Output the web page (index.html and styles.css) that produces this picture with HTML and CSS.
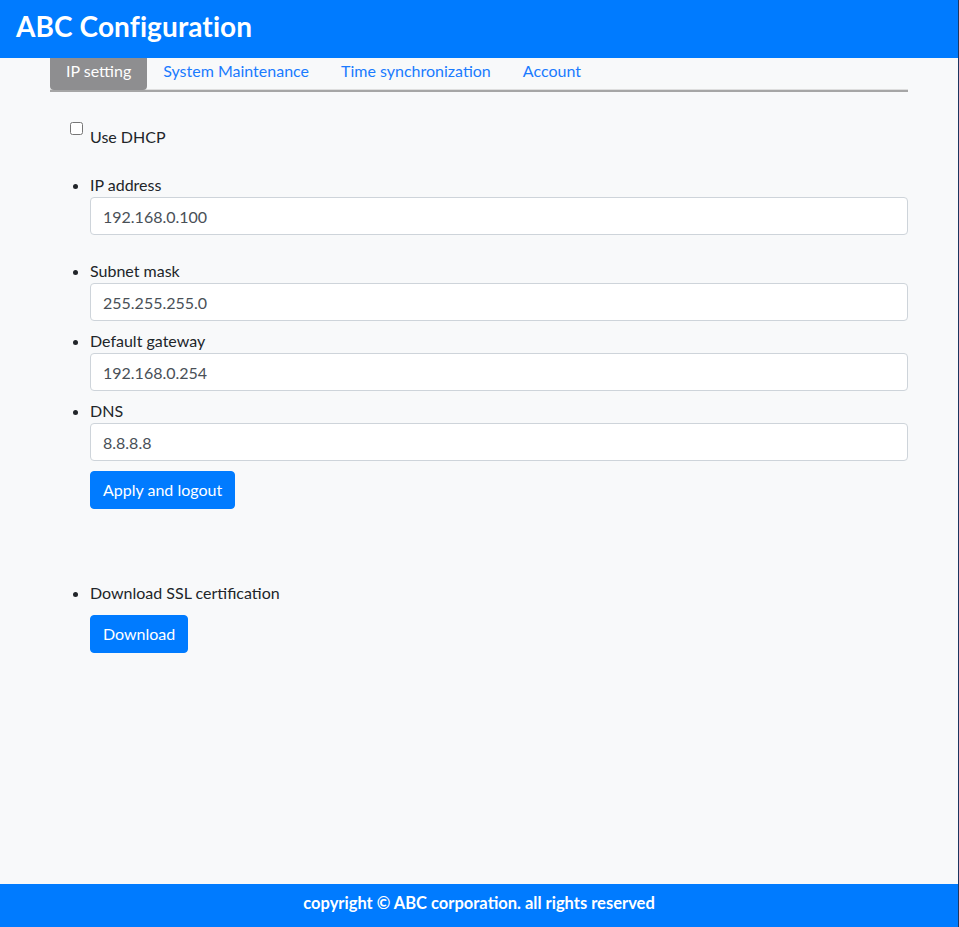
FILE: index.html
```html
<!DOCTYPE html>
<html lang="en">
<head>
<meta charset="utf-8">
<title>ABC Configuration</title>
<link rel="stylesheet" href="styles.css">
</head>
<body>
<div class="page">
  <header class="header">
    <h1 class="title">ABC Configuration</h1>
  </header>
  <main class="container">
    <nav class="tabs">
      <a class="tab active">IP setting</a>
      <a class="tab">System Maintenance</a>
      <a class="tab">Time synchronization</a>
      <a class="tab">Account</a>
    </nav>
    <div class="dhcp">
      <input type="checkbox" class="check">
      <span class="dhcp-label">Use DHCP</span>
    </div>
    <ul class="fields">
      <li class="field field-first">
        <div class="label">IP address</div>
        <input class="input" type="text" value="192.168.0.100">
      </li>
      <li class="field">
        <div class="label">Subnet mask</div>
        <input class="input" type="text" value="255.255.255.0">
      </li>
      <li class="field">
        <div class="label">Default gateway</div>
        <input class="input" type="text" value="192.168.0.254">
      </li>
      <li class="field">
        <div class="label">DNS</div>
        <input class="input" type="text" value="8.8.8.8">
        <button class="btn">Apply and logout</button>
      </li>
      <li class="field field-ssl">
        <div class="label">Download SSL certification</div>
        <button class="btn">Download</button>
      </li>
    </ul>
  </main>
  <footer class="footer">copyright © ABC corporation. all rights reserved</footer>
</div>
</body>
</html>
```
FILE: styles.css
```css
* { box-sizing: border-box; }
html { background: #1c3660; }
body {
  margin: 0;
  width: 958px;
  font-family: Lato, "Open Sans", sans-serif;
  font-size: 16px;
  line-height: 24px;
  color: #212529;
  background: #f8f9fa;
}
.page {
  min-height: 927px;
  display: flex;
  flex-direction: column;
}
.header {
  height: 58px;
  background: #007bff;
  padding: 0 16px 6px;
  display: flex;
  align-items: center;
}
.title {
  margin: 0;
  color: #fff;
  font-size: 28px;
  font-weight: 700;
  line-height: 34px;
  letter-spacing: 0.1px;
}
.container {
  flex: 1;
  margin: 0 50px;
}
.tabs {
  display: flex;
  height: 34px;
  border-bottom: 2px solid #a6a6a6;
  box-shadow: inset 0 -1px 0 #dedede;
}
.tab {
  height: 32px;
  padding: 0 16px 6px;
  display: flex;
  align-items: center;
  color: #1a7bff;
  text-decoration: none;
}
.tab.active {
  background: #8e8e90;
  color: #fff;
  border-radius: 0 0 4px 4px;
}
.dhcp {
  display: flex;
  align-items: flex-start;
  margin: 30px 0 0 20px;
}
.check {
  width: 13px;
  height: 13px;
  margin: 0 7px 0 0;
}
.dhcp-label {
  padding-top: 3px;
}
.fields {
  margin: 24px 0 0;
  padding-left: 40px;
}
.field {
  margin-top: 8px;
}
.field-first { margin-top: 0; margin-bottom: 24px; }
.field-ssl { margin-top: 72px; }
.label { line-height: 24px; }
.input {
  display: block;
  width: 100%;
  height: 38px;
  padding: 6px 12px;
  border: 1px solid #ced4da;
  border-radius: 4px;
  background: #fff;
  font: inherit;
  color: #495057;
}
.btn {
  margin-top: 10px;
  height: 38px;
  padding: 6px 12px;
  border: 1px solid #007bff;
  border-radius: 4px;
  background: #007bff;
  color: #fff;
  font: inherit;
}
.footer {
  height: 43px;
  padding-bottom: 6px;
  background: #007bff;
  color: #fff;
  font-weight: 700;
  font-size: 16.5px;
  display: flex;
  align-items: center;
  justify-content: center;
}
```
